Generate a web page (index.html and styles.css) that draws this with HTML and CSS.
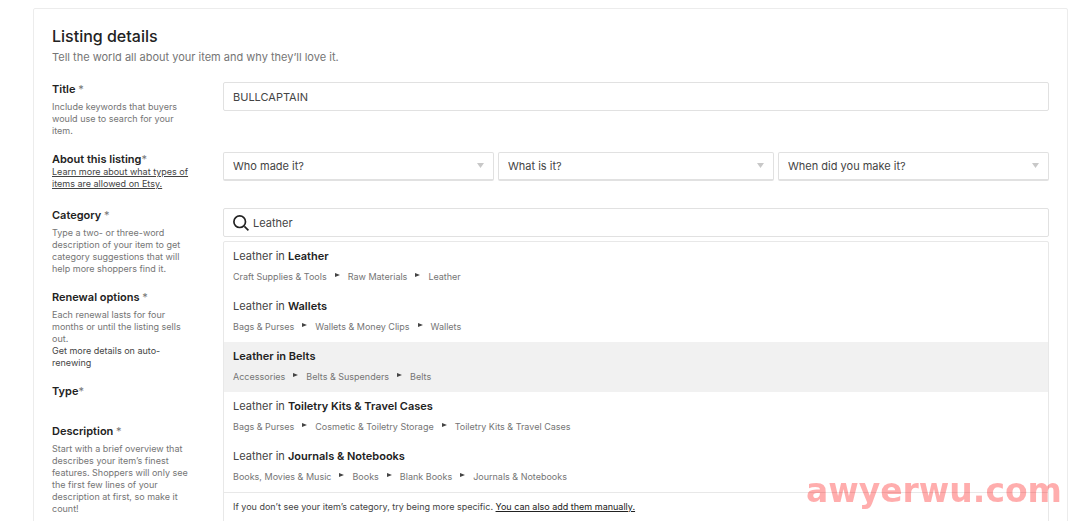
FILE: index.html
```
<!DOCTYPE html>
<html lang="en">
<head>
    <meta charset="UTF-8">
    <meta name="viewport" content="width=device-width, initial-scale=1.0">
    <title>Listing details</title>
    <link rel="stylesheet" href="styles.css">
</head>
<body>
    <main class="card">
        <h1 class="card-title">Listing details</h1>
        <p class="card-subtitle">Tell the world all about your item and why they’ll love it.</p>

        <form class="form">
            <div class="row">
                <div class="info">
                    <label class="label" for="title">Title <span class="required">*</span></label>
                    <p class="help">Include keywords that buyers<br>would use to search for your<br>item.</p>
                </div>
                <input class="control" type="text" id="title" value="BULLCAPTAIN">
            </div>

            <div class="row row-about">
                <div class="info">
                    <label class="label" for="who">About this listing<span class="required">*</span></label>
                    <a class="help-link underlined" href="#">Learn more about what types of<br>items are allowed on Etsy.</a>
                </div>
                <div class="selects">
                    <select class="control select" id="who"><option>Who made it?</option></select>
                    <select class="control select" id="what" aria-label="What is it?"><option>What is it?</option></select>
                    <select class="control select" id="when" aria-label="When did you make it?"><option>When did you make it?</option></select>
                </div>
            </div>

            <div class="row">
                <div class="info">
                    <label class="label" for="category">Category <span class="required">*</span></label>
                    <p class="help">Type a two- or three-word<br>description of your item to get<br>category suggestions that will<br>help more shoppers find it.</p>
                </div>
                <div class="category">
                    <div class="control search">
                        <svg class="search-icon" viewBox="0 0 16 16" aria-hidden="true">
                            <circle cx="6.7" cy="6.7" r="5.8"/>
                            <path d="M11.4 11.4 15.4 15.4"/>
                        </svg>
                        <input class="search-input" type="text" id="category" value="Leather">
                    </div>
                    <div class="suggestions">
                        <button type="button" class="suggestion">
                            <span class="match">Leather in <b>Leather</b></span>
                            <span class="crumbs">Craft Supplies &amp; Tools<i class="arrow"></i>Raw Materials<i class="arrow"></i>Leather</span>
                        </button>
                        <button type="button" class="suggestion">
                            <span class="match">Leather in <b>Wallets</b></span>
                            <span class="crumbs">Bags &amp; Purses<i class="arrow"></i>Wallets &amp; Money Clips<i class="arrow"></i>Wallets</span>
                        </button>
                        <button type="button" class="suggestion active">
                            <span class="match">Leather in <b>Belts</b></span>
                            <span class="crumbs">Accessories<i class="arrow"></i>Belts &amp; Suspenders<i class="arrow"></i>Belts</span>
                        </button>
                        <button type="button" class="suggestion">
                            <span class="match">Leather in <b>Toiletry Kits &amp; Travel Cases</b></span>
                            <span class="crumbs">Bags &amp; Purses<i class="arrow"></i>Cosmetic &amp; Toiletry Storage<i class="arrow"></i>Toiletry Kits &amp; Travel Cases</span>
                        </button>
                        <button type="button" class="suggestion">
                            <span class="match">Leather in <b>Journals &amp; Notebooks</b></span>
                            <span class="crumbs">Books, Movies &amp; Music<i class="arrow"></i>Books<i class="arrow"></i>Blank Books<i class="arrow"></i>Journals &amp; Notebooks</span>
                        </button>
                        <p class="manual">If you don’t see your item’s category, try being more specific. <a class="manual-link" href="#">You can also add them manually.</a></p>
                    </div>
                </div>
            </div>

            <div class="row">
                <div class="info">
                    <h2 class="label">Renewal options <span class="required">*</span></h2>
                    <p class="help">Each renewal lasts for four<br>months or until the listing sells<br>out.</p>
                    <a class="help-link" href="#">Get more details on auto-<br>renewing</a>
                </div>
            </div>

            <div class="row row-type">
                <div class="info">
                    <h2 class="label">Type<span class="required">*</span></h2>
                </div>
            </div>

            <div class="row">
                <div class="info">
                    <h2 class="label">Description <span class="required">*</span></h2>
                    <p class="help">Start with a brief overview that<br>describes your item’s finest<br>features. Shoppers will only see<br>the first few lines of your<br>description at first, so make it<br>count!</p>
                </div>
            </div>
        </form>
    </main>

    <div class="watermark">awyerwu.com</div>
</body>
</html>
```
FILE: styles.css
```
* {
    box-sizing: border-box;
}

body {
    margin: 0;
    padding: 8px 12px 0 33px;
    height: 100vh;
    overflow: hidden;
    background-color: #fff;
    color: #222;
    font-family: Inter, "Liberation Sans", sans-serif;
    font-size: 11px;
}

p,
h1,
h2 {
    margin: 0;
}

.card {
    min-height: 100vh;
    padding: 17px 18px 40px;
    border: 1px solid #ececec;
    border-radius: 2px;
}

.card-title {
    font-size: 16px;
    font-weight: 500;
    line-height: 20px;
}

.card-subtitle {
    margin-top: 4px;
    color: #757575;
    line-height: 14px;
}

.form {
    display: flex;
    flex-direction: column;
    gap: 15px;
    margin-top: 18px;
}

.row {
    display: grid;
    grid-template-columns: 140px 1fr;
    column-gap: 31px;
    align-items: start;
}

.row-about {
    padding-bottom: 3px;
}

.row-type {
    min-height: 25px;
}

.info {
    white-space: nowrap;
}

.label {
    display: block;
    font-size: 11px;
    font-weight: 600;
    line-height: 14px;
}

.required {
    color: #757575;
    font-weight: 400;
}

.help {
    margin-top: 5px;
    color: #757575;
    font-size: 9px;
    line-height: 12px;
}

.help-link {
    display: block;
    color: #444;
    font-size: 9px;
    line-height: 12px;
    text-decoration: none;
}

.underlined {
    text-decoration: underline;
}

.control {
    width: 100%;
    height: 29px;
    padding: 0 9px;
    border: 1px solid #e1e1e1;
    border-radius: 2px;
    background-color: #fff;
    color: #444;
    font-family: inherit;
    font-size: 11px;
}

.selects {
    display: grid;
    grid-template-columns: 54fr 55fr 54fr;
    gap: 4px;
}

.select {
    appearance: none;
    border-bottom: 2px solid #e1e1e1;
    background-image: url("data:image/svg+xml,%3Csvg xmlns='http://www.w3.org/2000/svg' width='7' height='5'%3E%3Cpath d='M0 0h7L3.5 5z' fill='%23c8c8c8'/%3E%3C/svg%3E");
    background-repeat: no-repeat;
    background-position: right 9px top 10px;
}

.category {
    position: relative;
}

.search {
    display: flex;
    align-items: center;
    gap: 4px;
}

.search-icon {
    width: 16px;
    height: 16px;
    fill: none;
    stroke: #222;
    stroke-width: 1.7;
}

.search-input {
    flex: 1;
    padding: 0;
    border: none;
    outline: none;
    color: #444;
    font-family: inherit;
    font-size: 11px;
}

/* suggestion menu under the search box */
.suggestions {
    position: absolute;
    top: 33px;
    left: 0;
    right: 0;
    border: 1px solid #e8e8e8;
    border-radius: 2px;
    background-color: #fff;
}

.suggestion {
    display: block;
    width: 100%;
    height: 50px;
    padding: 0 9px 1px;
    border: none;
    background: none;
    color: #444;
    font-family: inherit;
    font-size: 11px;
    text-align: left;
    cursor: pointer;
}

.suggestion b {
    color: #222;
    font-weight: 600;
}

.suggestion.active {
    background-color: #f1f1f1;
}

.active .match {
    color: #222;
    font-weight: 600;
}

.match {
    display: block;
    line-height: 14px;
}

.crumbs {
    display: flex;
    align-items: center;
    margin-top: 7px;
    color: #757575;
    font-size: 9px;
    line-height: 14px;
}

.arrow {
    margin: 0 8px 4px;
    border-left: 5px solid #444;
    border-top: 2px solid transparent;
    border-bottom: 2px solid transparent;
}

.manual {
    padding: 7px 9px 12px;
    border-top: 1px solid #e8e8e8;
    color: #444;
    font-size: 9px;
    line-height: 14px;
}

.manual-link {
    color: #222;
}

.watermark {
    position: fixed;
    right: 18px;
    bottom: 10px;
    color: rgba(255, 0, 0, 0.32);
    font-family: "DejaVu Sans", sans-serif;
    font-size: 33px;
    font-weight: 700;
    line-height: 40px;
    pointer-events: none;
}
```
